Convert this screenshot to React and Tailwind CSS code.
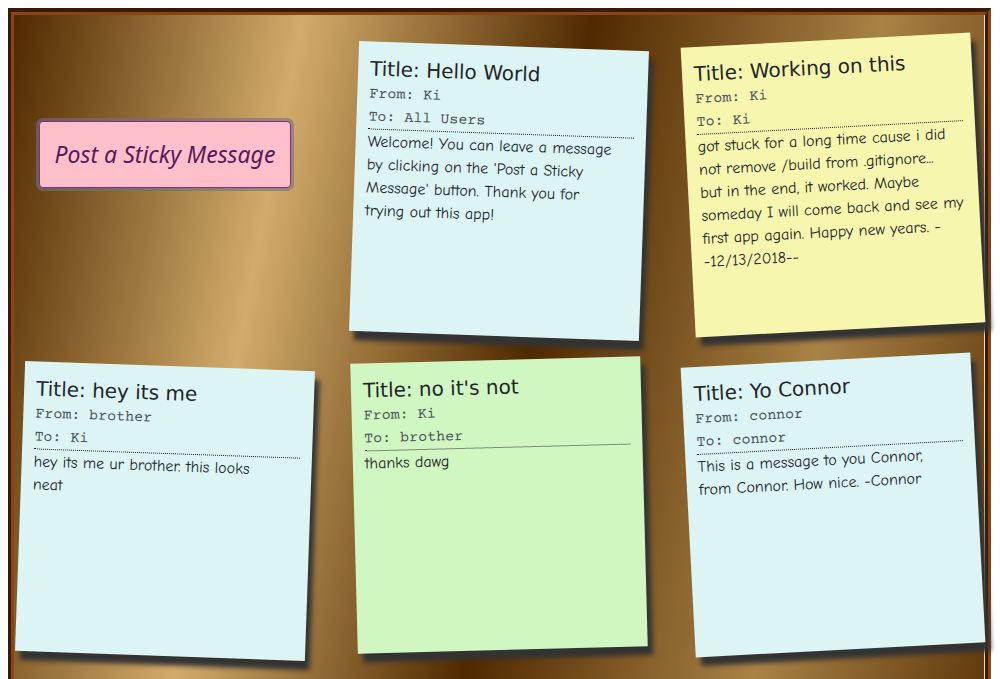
const TILTS = {
  right: 'rotate-2 mt-[6px]',
  left: '-rotate-3',
  slight: '-rotate-[1.5deg]',
};

const PAPERS = {
  blue: 'bg-[#dcf4f4]',
  yellow: 'bg-[#f7f6ae]',
  green: 'bg-[#d0f7c2]',
};

const NOTES = [
  {
    title: 'Hello World', from: 'Ki', to: 'All Users', paper: 'blue', tilt: 'right',
    body: "Welcome! You can leave a message\nby clicking on the 'Post a Sticky\nMessage' button. Thank you for\ntrying out this app!",
  },
  {
    title: 'Working on this', from: 'Ki', to: 'Ki', paper: 'yellow', tilt: 'left',
    body: 'got stuck for a long time cause i did\nnot remove /build from .gitignore...\nbut in the end, it worked. Maybe\nsomeday I will come back and see my\nfirst app again. Happy new years. -\n-12/13/2018--',
  },
  {
    title: 'hey its me', from: 'brother', to: 'Ki', paper: 'blue', tilt: 'right',
    body: 'hey its me ur brother. this looks\nneat',
  },
  { title: "no it's not", from: 'Ki', to: 'brother', paper: 'green', tilt: 'slight', body: 'thanks dawg' },
  {
    title: 'Yo Connor', from: 'connor', to: 'connor', paper: 'blue', tilt: 'left',
    body: 'This is a message to you Connor,\nfrom Connor. How nice. -Connor',
  },
];

function Note({ title, from, to, body, paper, tilt }) {
  return (
    <article
      className={`size-[290px] px-3 pt-[14px] text-[#212529] shadow-[5px_9px_5px_#333] ${PAPERS[paper]} ${TILTS[tilt]}`}
    >
      <header className="border-b border-dotted border-[#212529]">
        <h2 className="font-['Verdana','DejaVu_Sans',sans-serif] text-[20px] leading-[27px]">Title: {title}</h2>
        <div className="font-['Courier_Prime','FreeMono','Nimbus_Mono_PS','Liberation_Mono',monospace] text-[15px] leading-[23px] text-[#4a5558]">
          <p>From: {from}</p>
          <p>To: {to}</p>
        </div>
      </header>
      <p className="pt-px font-['Comic_Sans_MS','Comic_Neue','Open_Sans',sans-serif] text-[16px] leading-[23px] whitespace-pre">
        {body}
      </p>
    </article>
  );
}

export default function App() {
  return (
    <div className="overflow-x-hidden bg-white pt-2">
      <main className="mr-[9px] ml-2 min-h-screen border-[6px] border-t-[7px] border-[#8b4513] bg-[linear-gradient(101deg,#502900_0px,#d2ab6b_284px,#502900_569px,#a98246_853px,#502900_1138px)] [border-style:groove]">
        <div className="grid min-h-screen auto-rows-[290px] grid-cols-[repeat(3,290px)] content-start justify-between gap-y-[30px] border-r border-[#e8dccb] pt-[25px] pr-[6px] pb-6 pl-[6px]">
          <div className="flex justify-center pt-[81px]">
            <button
              type="button"
              className="h-[67px] w-[252px] rounded-[4px] border border-[#8b2a86] bg-[#ffc0cb] font-['Lucida_Sans','Noto_Sans',sans-serif] text-[23px] text-[#551a5b] italic ring-3 ring-[#6c757d]/60"
            >
              Post a Sticky Message
            </button>
          </div>
          {NOTES.map((note) => (
            <Note key={note.title} {...note} />
          ))}
        </div>
      </main>
    </div>
  );
}
